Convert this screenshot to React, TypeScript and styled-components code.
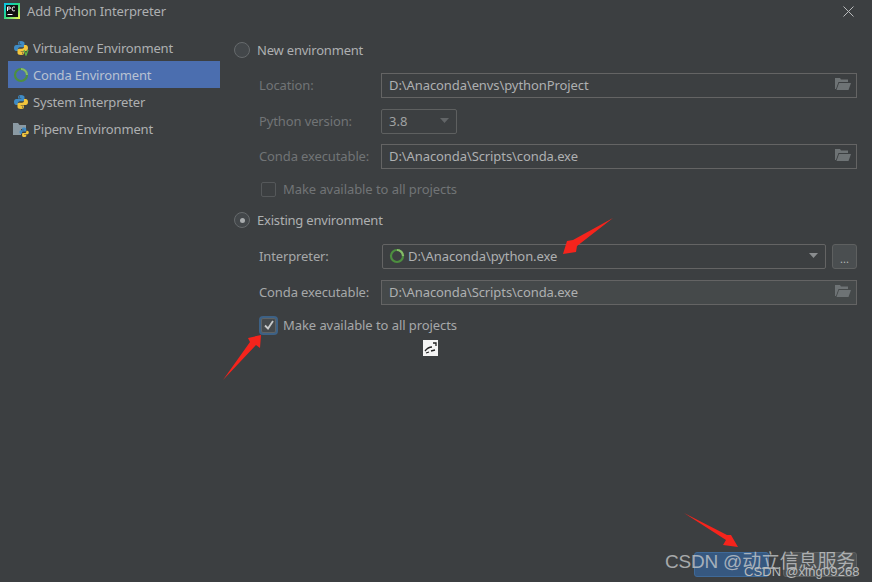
import React from 'react'
import styled, { createGlobalStyle } from 'styled-components'

const GlobalStyle = createGlobalStyle`
  html, body { margin: 0; padding: 0; background: #3c3f41; }
  body { font-family: "Noto Sans", "Liberation Sans", sans-serif; }
`

const Dialog = styled.div`
  position: relative;
  width: 872px;
  height: 582px;
  overflow: hidden;
  background: #3c3f41;
  display: flex;
  flex-direction: column;
  font-size: 13px;
  color: #bbbbbb;
`

const TitleBar = styled.div`
  height: 24px;
  box-sizing: border-box;
  padding: 0 18px 2px 4px;
  display: flex;
  align-items: center;
  gap: 7px;
  flex: none;
`

const Title = styled.span`
  flex: 1;
  color: #aeb0b1;
  letter-spacing: -0.13px;
`

const Body = styled.div`
  flex: 1;
  display: flex;
  min-height: 0;
`

const Sidebar = styled.div`
  width: 212px;
  margin: 10px 0 0 8px;
  flex: none;
  display: flex;
  flex-direction: column;
`

const SideItem = styled.div<{ $selected?: boolean }>`
  height: 27px;
  padding-left: 5px;
  display: flex;
  align-items: center;
  gap: 4px;
  box-sizing: border-box;
  letter-spacing: -0.17px;
  background: ${(p) => (p.$selected ? '#4b6eaf' : 'transparent')};
  color: ${(p) => (p.$selected ? '#b9c2d2' : '#aeb0b1')};
`

const Form = styled.div`
  flex: 1;
  padding: 14px 15px 5px 14px;
  display: flex;
  flex-direction: column;
  min-width: 0;
`

const RadioRow = styled.div<{ $top?: number }>`
  height: 24px;
  display: flex;
  align-items: center;
  gap: 7px;
  margin-top: ${(p) => p.$top ?? 0}px;
`

const RadioMark = styled.span<{ $on?: boolean }>`
  width: 14px;
  height: 14px;
  border-radius: 50%;
  border: 1px solid #666a6c;
  background: #43474a;
  display: flex;
  align-items: center;
  justify-content: center;
  flex: none;
  &::after {
    content: '';
    display: ${(p) => (p.$on ? 'block' : 'none')};
    width: 5px;
    height: 5px;
    border-radius: 50%;
    background: #a9acae;
  }
`

const RadioText = styled.span`
  color: #aeb0b1;
  letter-spacing: -0.2px;
`

const FieldRow = styled.div<{ $top: number }>`
  display: grid;
  grid-template-columns: 122px 1fr;
  align-items: center;
  height: 25px;
  margin-top: ${(p) => p.$top}px;
  padding-left: 25px;
`

const FieldLabel = styled.span<{ $dim?: boolean }>`
  color: ${(p) => (p.$dim ? '#717476' : '#a6a8a9')};
  letter-spacing: -0.12px;
  padding-bottom: 2px;
`

const PathField = styled.div<{ $dim?: boolean }>`
  height: 100%;
  box-sizing: border-box;
  border: 1px solid #646464;
  background: ${(p) => (p.$dim ? '#3c3f41' : '#45494a')};
  padding: 0 5px 2px 7px;
  display: flex;
  align-items: center;
  justify-content: space-between;
  color: #aeb0b1;
  letter-spacing: -0.09px;
`

const VersionSelect = styled.div`
  width: 76px;
  height: 100%;
  box-sizing: border-box;
  border: 1px solid #5e6060;
  border-radius: 2px;
  padding: 0 7px 2px 7px;
  display: flex;
  align-items: center;
  justify-content: space-between;
  color: #a0a2a3;
`

const ComboRow = styled.div`
  display: flex;
  gap: 6px;
  height: 100%;
`

const InterpreterSelect = styled.div`
  flex: 1;
  box-sizing: border-box;
  margin-left: 1px;
  border: 1px solid #646464;
  border-radius: 2px;
  padding: 0 7px 2px 6px;
  display: flex;
  align-items: center;
  gap: 3px;
  color: #aeb0b1;
  letter-spacing: -0.09px;
`

const InterpreterPath = styled.span`
  flex: 1;
`

const BrowseButton = styled.div`
  width: 25px;
  box-sizing: border-box;
  border: 1px solid #5e6060;
  border-radius: 3px;
  background: #4a4e50;
  color: #b4b6b7;
  font-size: 11px;
  display: flex;
  align-items: center;
  justify-content: center;
  padding-top: 3px;
`

const CheckRow = styled.div<{ $top: number }>`
  display: flex;
  align-items: center;
  gap: 7px;
  height: 20px;
  margin-top: ${(p) => p.$top}px;
  padding-left: 27px;
`

const CheckBox = styled.span<{ $on?: boolean }>`
  width: 15px;
  height: 15px;
  box-sizing: border-box;
  flex: none;
  border-radius: 2px;
  border: 1px solid ${(p) => (p.$on ? '#5f6365' : '#55585a')};
  background: ${(p) => (p.$on ? '#45494c' : 'transparent')};
  box-shadow: ${(p) => (p.$on ? '0 0 0 2px #3d6185' : 'none')};
  display: flex;
  align-items: center;
  justify-content: center;
`

const CheckText = styled.span<{ $dim?: boolean }>`
  color: ${(p) => (p.$dim ? '#717476' : '#a6a8a9')};
  letter-spacing: -0.07px;
`

const Footer = styled.div`
  margin-top: auto;
  display: flex;
  justify-content: flex-end;
  gap: 14px;
`

const FooterButton = styled.div<{ $primary?: boolean }>`
  width: ${(p) => (p.$primary ? 75 : 74)}px;
  height: 25px;
  box-sizing: border-box;
  border-radius: 3px;
  background: ${(p) => (p.$primary ? '#365880' : '#4c5052')};
  border: 1px solid ${(p) => (p.$primary ? '#3f6a99' : '#5e6060')};
`

const Overlay = styled.svg`
  position: absolute;
  left: 0;
  top: 0;
  pointer-events: none;
`

const PasteBadge = styled.div`
  position: absolute;
  left: 423px;
  top: 340px;
  width: 15px;
  height: 16px;
  background: #f4f4f4;
`

const WatermarkMain = styled.div`
  position: absolute;
  left: 665px;
  top: 549px;
  font-family: "Liberation Sans", "Noto Sans CJK SC", sans-serif;
  font-size: 19px;
  line-height: 26px;
  letter-spacing: -0.2px;
  color: #d0d2d3;
  opacity: 0.72;
  white-space: nowrap;
`

const WatermarkSmall = styled.div`
  position: absolute;
  left: 744px;
  top: 563px;
  font-family: "Liberation Sans", sans-serif;
  font-size: 13px;
  line-height: 17px;
  letter-spacing: 0.14px;
  color: #b9bbbc;
  white-space: nowrap;
`

const PyCharmLogo = () => (
  <svg width="16" height="16" viewBox="0 0 16 16">
    <defs>
      <linearGradient id="pc" x1="0" y1="0" x2="1" y2="1">
        <stop offset="0" stopColor="#07c3f2" />
        <stop offset="0.45" stopColor="#21d789" />
        <stop offset="1" stopColor="#fcf84a" />
      </linearGradient>
    </defs>
    <rect width="16" height="16" fill="url(#pc)" />
    <rect x="2" y="2" width="12" height="12" fill="#111" />
    <path d="M3.500 4v4M3.500 4h1.800q1.200 0 1.200 1t-1.200 1H3.500" stroke="#fff" strokeWidth="1" fill="none" />
    <path d="M11 4.400q-.6-.5-1.300-.5-1.600 0-1.600 2t1.600 2q.7 0 1.300-.5" stroke="#fff" strokeWidth="1" fill="none" />
    <rect x="3.500" y="11" width="5" height="1" fill="#fff" />
  </svg>
)

const PythonIcon = ({ badge }: { badge?: boolean }) => (
  <svg width="16" height="16" viewBox="0 0 16 16">
    <path d="M8 1C5.500 1 5 2 5 3v1.500h3.300V5H3.200C2 5 1 6 1 8s1 3 2.200 3H5V9.300C5 8 6 7.300 7 7.300h3c1 0 1.500-.8 1.500-1.500V3c0-1-1.200-2-3.500-2z" fill="#3f8bc4" />
    <path d="M8 15c2.500 0 3-1 3-2v-1.500H7.700V11h5.100C14 11 15 10 15 8s-1-3-2.200-3H11v1.700C11 8 10 8.700 9 8.700H6c-1 0-1.500.8-1.500 1.500V13c0 1 1.200 2 3.500 2z" fill="#f2c53d" />
    <circle cx="6.300" cy="2.900" r=".7" fill="#3c3f41" />
    <circle cx="9.700" cy="13.100" r=".7" fill="#3c3f41" />
    {badge && <path d="M11 10l2 5 2-5" stroke="#62b543" strokeWidth="1.300" fill="none" />}
  </svg>
)

const PipenvIcon = () => (
  <svg width="16" height="16" viewBox="0 0 16 16">
    <path d="M0 2h5l1.500 2H13v4H8v6H0z" fill="#8b9aa3" />
    <path d="M11 6.500c-1.600 0-2 .7-2 1.300v1h2.200v.4H8C7.200 9.200 6.500 10 6.500 11s.7 1.800 1.500 1.800h1v-1c0-.8.7-1.300 1.400-1.300h1.800c.7 0 1-.5 1-1V7.800c0-.7-.9-1.300-2.200-1.300z" fill="#3f8bc4" />
    <path d="M11.300 16c1.600 0 2-.7 2-1.300v-1h-2.200v-.4h3.200c.8 0 1.500-.8 1.500-1.800s-.7-1.800-1.500-1.800h-1v1c0 .8-.7 1.300-1.400 1.300h-1.800c-.7 0-1 .5-1 1v1.700c0 .7.900 1.300 2.200 1.300z" fill="#f2c53d" />
  </svg>
)

const CondaIcon = () => (
  <svg width="16" height="16" viewBox="0 0 16 16">
    <circle cx="8" cy="8" r="6" fill="none" stroke="#4d8f3f" strokeWidth="2.200" />
    <path d="M8 2a6 6 0 0 1 6 6" fill="none" stroke="#86bb68" strokeWidth="2.200" />
  </svg>
)

const FolderIcon = () => (
  <svg width="16" height="13" viewBox="0 0 16 13">
    <path d="M0 0h5l1 1.500h7V4H3.500L1 11H0z" fill="#6e7375" />
    <path d="M4 5h12l-2.500 7H1.500z" fill="#6e7375" />
  </svg>
)

const ArrowDown = ({ dim }: { dim?: boolean }) => (
  <svg width="9" height="5" viewBox="0 0 9 5">
    <path d="M0 0h9L4.500 5z" fill={dim ? '#626567' : '#8a8d8f'} />
  </svg>
)

const CloseIcon = () => (
  <svg width="11" height="11" viewBox="0 0 11 11">
    <path d="M.5.500l10 10M10.500.500l-10 10" stroke="#b9bbbc" strokeWidth="1" fill="none" />
  </svg>
)

const CheckIcon = () => (
  <svg width="10" height="10" viewBox="0 0 10 10">
    <path d="M1 5.500L4 8.500 9 1" stroke="#c8cacb" strokeWidth="1.800" fill="none" />
  </svg>
)

const sideItems = [
  { label: 'Virtualenv Environment', icon: <PythonIcon badge /> },
  { label: 'Conda Environment', icon: <CondaIcon />, selected: true },
  { label: 'System Interpreter', icon: <PythonIcon /> },
  { label: 'Pipenv Environment', icon: <PipenvIcon /> },
]

const App = () => (
  <Dialog>
    <GlobalStyle />
    <TitleBar>
      <PyCharmLogo />
      <Title>Add Python Interpreter</Title>
      <CloseIcon />
    </TitleBar>
    <Body>
      <Sidebar>
        {sideItems.map((item) => (
          <SideItem key={item.label} $selected={item.selected}>
            {item.icon}
            {item.label}
          </SideItem>
        ))}
      </Sidebar>
      <Form>
        <RadioRow>
          <RadioMark />
          <RadioText>New environment</RadioText>
        </RadioRow>
        <FieldRow $top={11}>
          <FieldLabel $dim>Location:</FieldLabel>
          <PathField $dim>D:\Anaconda\envs\pythonProject<FolderIcon /></PathField>
        </FieldRow>
        <FieldRow $top={11}>
          <FieldLabel $dim>Python version:</FieldLabel>
          <VersionSelect>3.8<ArrowDown dim /></VersionSelect>
        </FieldRow>
        <FieldRow $top={10}>
          <FieldLabel $dim>Conda executable:</FieldLabel>
          <PathField $dim>D:\Anaconda\Scripts\conda.exe<FolderIcon /></PathField>
        </FieldRow>
        <CheckRow $top={10}>
          <CheckBox />
          <CheckText $dim>Make available to all projects</CheckText>
        </CheckRow>
        <RadioRow $top={9}>
          <RadioMark $on />
          <RadioText>Existing environment</RadioText>
        </RadioRow>
        <FieldRow $top={12}>
          <FieldLabel>Interpreter:</FieldLabel>
          <ComboRow>
            <InterpreterSelect>
              <CondaIcon />
              <InterpreterPath>D:\Anaconda\python.exe</InterpreterPath>
              <ArrowDown />
            </InterpreterSelect>
            <BrowseButton>...</BrowseButton>
          </ComboRow>
        </FieldRow>
        <FieldRow $top={11}>
          <FieldLabel>Conda executable:</FieldLabel>
          <PathField>D:\Anaconda\Scripts\conda.exe<FolderIcon /></PathField>
        </FieldRow>
        <CheckRow $top={10}>
          <CheckBox $on><CheckIcon /></CheckBox>
          <CheckText>Make available to all projects</CheckText>
        </CheckRow>
        <Footer>
          <FooterButton $primary />
          <FooterButton />
        </Footer>
      </Form>
    </Body>
    <PasteBadge>
      <svg width="15" height="16" viewBox="0 0 15 16">
        <path d="M2 11q3-4 7-4M3 13l3-1M8 11l4-1M10 3h3v3" stroke="#222" strokeWidth="1.300" fill="none" />
      </svg>
    </PasteBadge>
    <Overlay width="872" height="582" viewBox="0 0 872 582">
      <path d="M613 218L573 240 567 241 563 254 576 252 577 246z" fill="#f5241c" />
      <path d="M223 380L250 342 248 338 261 335 260 348 256 345z" fill="#f5241c" />
      <path d="M684 513L727 535 731 535 738 547 723 545 726 540z" fill="#f5241c" />
    </Overlay>
    <WatermarkMain>CSDN @动立信息服务</WatermarkMain>
    <WatermarkSmall>CSDN @xing09268</WatermarkSmall>
  </Dialog>
)

export default App
